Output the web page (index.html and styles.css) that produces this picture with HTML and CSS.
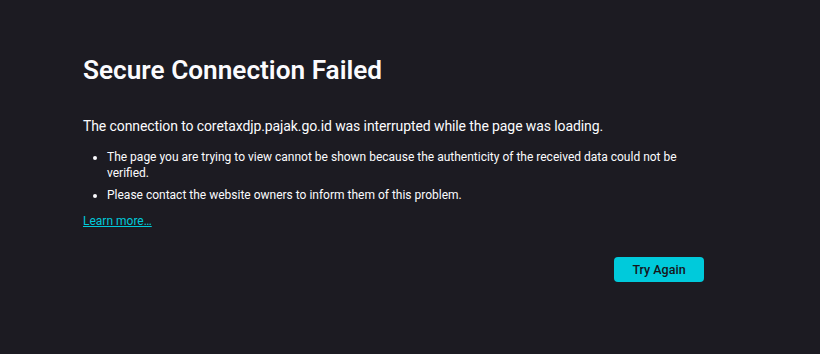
FILE: index.html
```html
<!DOCTYPE html>
<html lang="en">
<head>
<meta charset="utf-8">
<title>Secure Connection Failed</title>
<link rel="stylesheet" href="styles.css">
</head>
<body>
<main class="container">
  <h1 class="title">Secure Connection Failed</h1>
  <p class="intro">The connection to coretaxdjp.pajak.go.id was interrupted while the page was loading.</p>
  <ul class="details">
    <li>The page you are trying to view cannot be shown because the authenticity of the received data could not be verified.</li>
    <li>Please contact the website owners to inform them of this problem.</li>
  </ul>
  <p class="more"><a class="learn" href="#">Learn more…</a></p>
  <div class="actions">
    <button class="primary" type="button">Try Again</button>
  </div>
</main>
</body>
</html>
```
FILE: styles.css
```css
html, body {
  margin: 0;
  padding: 0;
  height: 100%;
}
body {
  background: #1c1b22;
  color: #fbfbfe;
  font-family: Roboto, "Liberation Sans", sans-serif;
}
.container {
  width: 621px;
  margin-left: 83px;
  padding-top: 54px;
}
.title {
  margin: 0;
  font-size: 26.2px;
  line-height: 32px;
  font-weight: 600;
}
.intro {
  margin: 28.5px 0 0;
  font-size: 14px;
  line-height: 22px;
  letter-spacing: -0.1px;
}
.details {
  margin: 12.4px 0 0;
  padding-left: 24px;
  font-size: 12px;
  line-height: 16px;
}
.details li {
  margin-bottom: 6.6px;
}
.more {
  margin: 9.6px 0 0;
  font-size: 12px;
  line-height: 16px;
}
.learn {
  color: #00cadb;
}
.actions {
  display: flex;
  justify-content: flex-end;
  margin-top: 27.6px;
}
.primary {
  width: 90px;
  height: 25px;
  border: none;
  border-radius: 4px;
  background: #00cadb;
  color: #15141a;
  font-family: Roboto, "Liberation Sans", sans-serif;
  font-size: 12.5px;
  font-weight: 500;
  padding: 0;
}
```
